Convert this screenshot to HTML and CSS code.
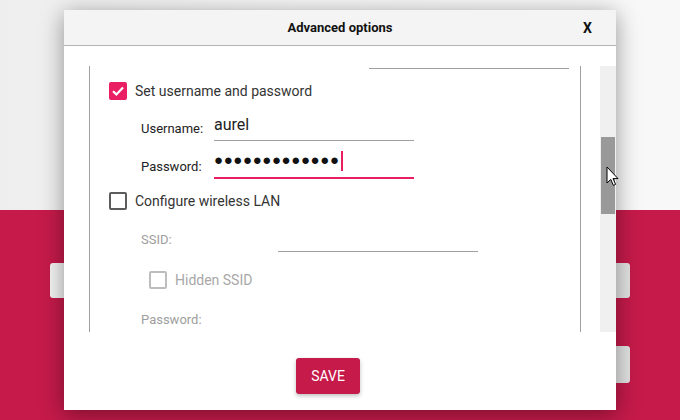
FILE: index.html
```html
<!DOCTYPE html>
<html lang="en">
<head>
  <meta charset="UTF-8">
  <title>Advanced options</title>
  <link rel="stylesheet" href="styles.css">
</head>
<body>
  <!-- main window behind the dialog -->
  <div class="page">
    <div class="page-top"></div>
    <div class="page-bottom">
      <div class="bg-row">
        <div class="bg-btn"></div>
        <div class="bg-btn"></div>
      </div>
      <div class="bg-row end">
        <div class="bg-btn small"></div>
      </div>
    </div>
  </div>

  <div class="dialog">
    <div class="dialog-head">
      <span class="dialog-title">Advanced options</span>
      <span class="dialog-close">X</span>
    </div>

    <div class="dialog-body">
      <div class="scroll">
        <div class="group">
          <div class="prev-field"></div>

          <div class="check-row">
            <span class="box checked">
              <svg width="14" height="14" viewBox="0 0 14 14"><path d="M2 7.2 L5.4 10.4 L12 3.6" fill="none" stroke="#fff" stroke-width="2.2"/></svg>
            </span>
            <span class="check-text">Set username and password</span>
          </div>

          <div class="field-row">
            <span class="field-label">Username:</span>
            <div class="text-input">aurel</div>
          </div>

          <div class="field-row pass">
            <span class="field-label">Password:</span>
            <div class="text-input focused"><span class="dots">●●●●●●●●●●●●●</span><span class="caret"></span></div>
          </div>

          <div class="check-row">
            <span class="box"></span>
            <span class="check-text">Configure wireless LAN</span>
          </div>

          <div class="field-row ssid">
            <span class="field-label disabled">SSID:</span>
            <div class="text-input"></div>
          </div>

          <div class="check-row hidden-row">
            <span class="box disabled"></span>
            <span class="check-text disabled">Hidden SSID</span>
          </div>

          <div class="field-label disabled wifi-pass">Password:</div>
        </div>
      </div>
      <div class="scrollbar">
        <div class="thumb"></div>
      </div>
    </div>

    <div class="dialog-foot">
      <button class="save-btn">SAVE</button>
    </div>
  </div>

  <svg class="cursor" width="13" height="21" viewBox="0 0 13 21">
    <path d="M1 1 L1 17 L4.8 13.4 L7.4 19.4 L9.6 18.4 L7 12.6 L12 12.6 Z" fill="#fff" stroke="#000" stroke-width="1"/>
  </svg>
</body>
</html>
```

FILE: styles.css
```css
body {
  margin: 0;
  font-family: Roboto, "Liberation Sans", sans-serif;
  width: 680px;
  height: 420px;
  overflow: hidden;
  position: relative;
}
.page {
  display: flex;
  flex-direction: column;
  height: 420px;
}
.page-top {
  height: 210px;
  background: linear-gradient(to right, #eeeeee, #f6f6f6 40%, #f8f8f8);
}
.page-bottom {
  flex: 1;
  background: #c51a4a;
  padding: 53px 50px 0 50px;
}
.bg-row {
  display: flex;
  justify-content: space-between;
}
.bg-row.end {
  justify-content: flex-end;
  margin-top: 48px;
}
.bg-btn {
  width: 160px;
  height: 35px;
  border-radius: 3px;
  background: linear-gradient(to right, #f4f4f4, #e2e2e2);
}
.bg-btn.small {
  height: 37px;
}

/* dialog */
.dialog {
  position: absolute;
  left: 64px;
  top: 10px;
  width: 552px;
  height: 400px;
  background: #fff;
  box-shadow: 0 4px 22px rgba(0,0,0,0.4);
  display: flex;
  flex-direction: column;
}
.dialog-head {
  height: 35px;
  background: #f4f4f4;
  border-bottom: 1px solid #b4b4b4;
  display: flex;
  align-items: center;
  justify-content: center;
  position: relative;
}
.dialog-title {
  font-size: 13px;
  font-weight: bold;
  color: #111;
}
.dialog-close {
  position: absolute;
  right: 24px;
  top: 10px;
  font-size: 14px;
  font-weight: bold;
  color: #111;
}
.dialog-body {
  display: flex;
  padding-top: 20px;
  height: 266px;
}
.scroll {
  flex: 1;
  padding: 0 19px 0 25px;
  overflow: hidden;
}
.group {
  border-left: 1px solid #a0a0a0;
  border-right: 1px solid #a0a0a0;
  height: 266px;
  padding-left: 19px;
  overflow: hidden;
}
.prev-field {
  margin-left: 260px;
  width: 200px;
  height: 2px;
  border-bottom: 1px solid #a0a0a0;
}
.check-row {
  display: flex;
  align-items: center;
  gap: 8px;
  height: 44px;
}
.box {
  width: 18px;
  height: 18px;
  box-sizing: border-box;
  border: 2px solid #5c5c5c;
  border-radius: 2px;
  display: flex;
  align-items: center;
  justify-content: center;
}
.box.checked {
  background: #e91e63;
  border-color: #e91e63;
}
.box.disabled {
  border-color: #bdbdbd;
}
.check-text {
  font-size: 14px;
  color: #333;
}
.check-text.disabled {
  color: #a8a8a8;
}
.hidden-row {
  padding-left: 40px;
}
.check-row.hidden-row {
  height: 56px;
}
.field-row {
  display: flex;
  align-items: flex-end;
  padding-left: 32px;
}
.field-label {
  width: 73px;
  font-size: 13px;
  line-height: 16px;
  color: #222;
  margin-bottom: 4px;
}
.field-label.disabled {
  color: #9e9e9e;
}
.text-input {
  width: 200px;
  height: 23px;
  line-height: 23px;
  padding-bottom: 4px;
  border-bottom: 1px solid #a0a0a0;
  font-size: 16px;
  color: #222;
  display: flex;
  align-items: center;
}
.field-row.pass {
  margin-top: 7px;
}
.field-row.pass .text-input {
  height: 25px;
}
.text-input.focused {
  border-bottom: 2px solid #e91e63;
}
.dots {
  font-size: 15px;
  letter-spacing: 0.6px;
  color: #111;
}
.caret {
  width: 2px;
  height: 20px;
  margin-left: 1px;
  background: #e91e63;
}
.field-row.ssid .field-label {
  width: 137px;
}
.field-row.ssid .text-input {
  height: 24px;
}
.wifi-pass {
  margin: 4px 0 0 32px;
}
.scrollbar {
  width: 16px;
  background: #f0f0f0;
}
.thumb {
  margin: 71px 0 0 1px;
  width: 14px;
  height: 77px;
  background: #999;
}
.dialog-foot {
  flex: 1;
  display: flex;
  justify-content: center;
  align-items: flex-start;
  padding: 26px 24px 0 0;
}
.save-btn {
  width: 64px;
  height: 36px;
  border: none;
  border-radius: 3px;
  background: #c51a4a;
  color: #fff;
  font-family: Roboto, "Liberation Sans", sans-serif;
  font-size: 14px;
  box-shadow: 0 2px 4px rgba(0,0,0,0.25);
}
.cursor {
  position: absolute;
  left: 606px;
  top: 166px;
}
```
